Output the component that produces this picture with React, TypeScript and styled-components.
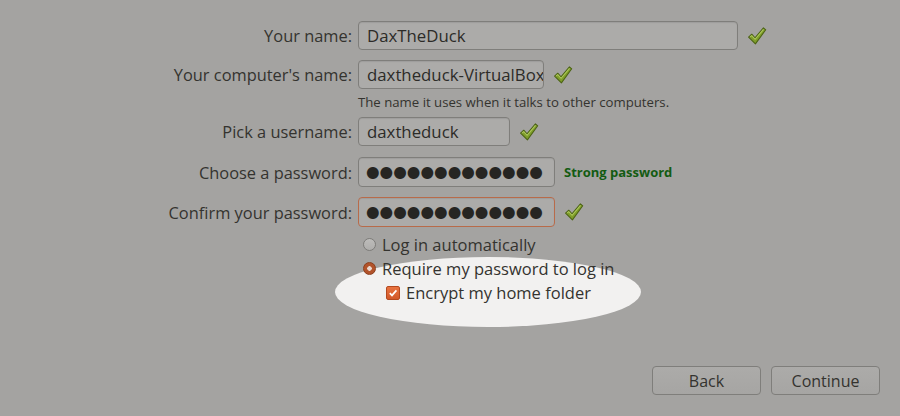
import styled, {createGlobalStyle} from 'styled-components';

const GlobalStyle = createGlobalStyle`
  html, body {
    margin: 0;
    padding: 0;
    background: #a4a3a1;
  }
  body {
    font-family: 'Open Sans', 'DejaVu Sans', sans-serif;
    color: #34332f;
  }
`;

const Page = styled.div`
  width: 900px;
  height: 416px;
  display: flex;
  flex-direction: column;
  box-sizing: border-box;
  padding-top: 21px;
  overflow: hidden;
`;

const Form = styled.div`
  display: grid;
  grid-template-columns: 352px 1fr;
  column-gap: 6px;
  align-items: center;
`;

const Label = styled.div<{$top?: number}>`
  text-align: right;
  font-size: 16.4px;
  color: #34332f;
  margin-top: ${(p) => p.$top ?? 0}px;
`;

const Field = styled.div<{$top?: number}>`
  display: flex;
  align-items: center;
  gap: 9px;
  margin-top: ${(p) => p.$top ?? 0}px;
`;

const Input = styled.div<{$width: number; $height?: number; $error?: boolean}>`
  box-sizing: border-box;
  width: ${(p) => p.$width}px;
  height: ${(p) => p.$height ?? 29}px;
  border: 1px solid ${(p) => (p.$error ? '#b86b4a' : '#7f7e7b')};
  border-radius: 4px;
  background: #acaba9;
  box-shadow: inset 0 1px 1px rgba(0, 0, 0, 0.08);
  padding: 0 8px;
  display: flex;
  align-items: center;
  font-size: 16.8px;
  color: #2c2b28;
  white-space: nowrap;
  overflow: hidden;
`;

const Dots = styled.span`
  font-family: 'DejaVu Sans', sans-serif;
  font-size: 15.6px;
  letter-spacing: 0;
  color: #262522;
  margin-left: -1px;
`;

const Hint = styled.div`
  grid-column: 2;
  font-size: 13.2px;
  color: #34332f;
  margin-top: 5px;
  margin-bottom: 6px;
  line-height: 17px;
`;

const Strength = styled.span`
  font-size: 13px;
  font-weight: 700;
  color: #135b12;
`;

const Options = styled.div`
  margin-left: 363px;
  margin-top: 7px;
  display: flex;
  flex-direction: column;
  gap: 3px;
`;

const Option = styled.label<{$indent?: number}>`
  display: flex;
  align-items: center;
  gap: 6px;
  margin-left: ${(p) => p.$indent ?? 0}px;
  font-size: 16.5px;
  line-height: 21px;
  color: #34332f;
  position: relative;
`;

const Spotlight = styled.div`
  position: absolute;
  left: -51px;
  top: -25px;
  width: 306px;
  height: 70px;
  border-radius: 50%;
  background: #f2f1f0;
  z-index: 0;
`;

const OptionText = styled.span`
  position: relative;
  z-index: 1;
`;

const Radio = styled.span<{$on?: boolean}>`
  box-sizing: border-box;
  width: 13px;
  height: 13px;
  border-radius: 50%;
  border: 1px solid ${(p) => (p.$on ? '#8a3e1c' : '#7d7c79')};
  background: ${(p) =>
    p.$on
      ? 'radial-gradient(circle, #e9d8cf 0 2px, #b2532a 2.5px)'
      : 'linear-gradient(#bdbcba, #afaeac)'};
  flex-shrink: 0;
  position: relative;
  z-index: 1;
`;

const Check = styled.span`
  box-sizing: border-box;
  width: 14px;
  height: 14px;
  border-radius: 2px;
  background: linear-gradient(#e8733f, #d2592a);
  border: 1px solid #b4491f;
  display: flex;
  align-items: center;
  justify-content: center;
  flex-shrink: 0;
  position: relative;
  z-index: 1;
`;

const Footer = styled.div`
  margin-top: auto;
  display: flex;
  justify-content: flex-end;
  gap: 10px;
  padding: 0 20px 21px 0;
`;

const Button = styled.button`
  box-sizing: border-box;
  width: 109px;
  height: 29px;
  border: 1px solid #7f7e7b;
  border-radius: 4px;
  background: linear-gradient(#acaba9, #a6a5a3);
  font-family: 'Open Sans', 'DejaVu Sans', sans-serif;
  font-size: 16px;
  color: #34332f;
  padding: 0;
`;

function Tick() {
  return (
    <svg width="20" height="20" viewBox="0 0 19 19">
      <path
        d="M1.5 10.5 L4.5 7.8 L7.6 11.2 L15.6 1.8 L17.8 3.6 L8 17 Z"
        fill="#7f9e2a"
        stroke="#4c6315"
        strokeWidth="1"
        strokeLinejoin="round"
      />
      <path d="M3 10.4 L4.5 9.2 L7.7 12.6 L15.7 3.2" fill="none" stroke="#adc75c" strokeWidth="1" />
    </svg>
  );
}

function SmallTick() {
  return (
    <svg width="10" height="10" viewBox="0 0 10 10">
      <path d="M1.8 5.2 L4 7.4 L8.4 2.4" fill="none" stroke="#fff" strokeWidth="1.7" />
    </svg>
  );
}

export default function App() {
  return (
    <>
      <GlobalStyle />
      <Page>
        <Form>
          <Label>Your name:</Label>
          <Field>
            <Input $width={380}>DaxTheDuck</Input>
            <Tick />
          </Field>

          <Label $top={10}>Your computer's name:</Label>
          <Field $top={10}>
            <Input $width={186}>daxtheduck-VirtualBox</Input>
            <Tick />
          </Field>
          <Hint>The name it uses when it talks to other computers.</Hint>

          <Label>Pick a username:</Label>
          <Field>
            <Input $width={152}>daxtheduck</Input>
            <Tick />
          </Field>

          <Label $top={11}>Choose a password:</Label>
          <Field $top={11}>
            <Input $width={197} $height={30}>
              <Dots>●●●●●●●●●●●●●</Dots>
            </Input>
            <Strength>Strong password</Strength>
          </Field>

          <Label $top={10}>Confirm your password:</Label>
          <Field $top={10}>
            <Input $width={197} $height={30} $error>
              <Dots>●●●●●●●●●●●●●</Dots>
            </Input>
            <Tick />
          </Field>
        </Form>

        <Options>
          <Option>
            <Radio />
            <OptionText>Log in automatically</OptionText>
          </Option>
          <Option>
            <Radio $on />
            <OptionText>Require my password to log in</OptionText>
          </Option>
          <Option $indent={23}>
            <Spotlight />
            <Check>
              <SmallTick />
            </Check>
            <OptionText>Encrypt my home folder</OptionText>
          </Option>
        </Options>

        <Footer>
          <Button>Back</Button>
          <Button>Continue</Button>
        </Footer>
      </Page>
    </>
  );
}
